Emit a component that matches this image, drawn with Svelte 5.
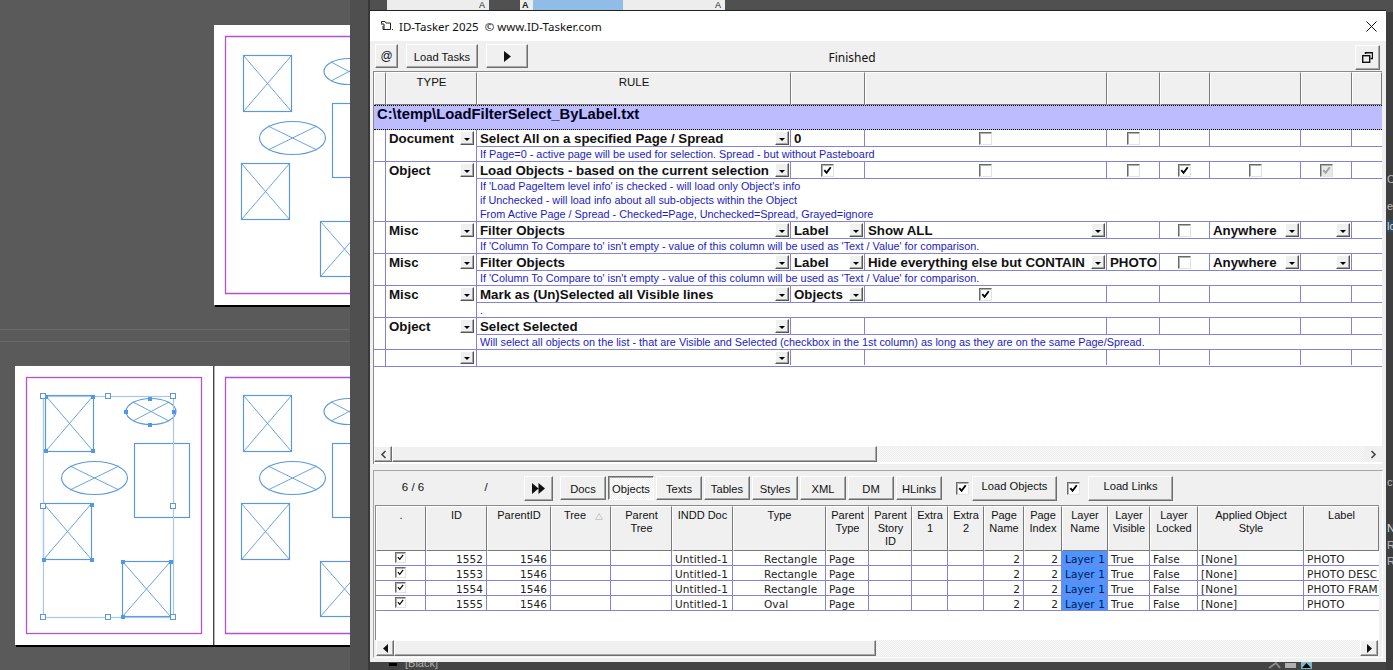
<script>
  const c = (s) => ({ k: 'c', s });
  const t = (v) => ({ k: 't', v });
  const d = (v = '') => ({ k: 'd', v });
  const n = { k: 'n' };

  const heads1 = ['', 'TYPE', 'RULE', '', '', '', '', '', '', ''];

  const rules = [
    { type: 'Document', rule: 'Select All on a specified Page / Spread',
      cells: [t('0'), c('off'), c('off'), n, n, n, n],
      sub: ['If Page=0 - active page will be used for selection. Spread - but without Pasteboard'] },
    { type: 'Object', rule: 'Load Objects - based on the current selection',
      cells: [c('on'), c('off'), c('off'), c('on'), c('off'), c('gray'), n],
      sub: ["If 'Load PageItem level info' is checked - will load only Object's info",
            'if Unchecked - will load info about all sub-objects within the Object',
            'From Active Page / Spread - Checked=Page, Unchecked=Spread, Grayed=ignore'] },
    { type: 'Misc', rule: 'Filter Objects',
      cells: [d('Label'), d('Show ALL'), n, c('off'), d('Anywhere'), d(), n],
      sub: ["If 'Column To Compare to' isn't empty - value of this column will be used as 'Text / Value' for comparison."] },
    { type: 'Misc', rule: 'Filter Objects',
      cells: [d('Label'), d('Hide everything else but CONTAIN'), t('PHOTO'), c('off'), d('Anywhere'), d(), n],
      sub: ["If 'Column To Compare to' isn't empty - value of this column will be used as 'Text / Value' for comparison."] },
    { type: 'Misc', rule: 'Mark as (Un)Selected all Visible lines',
      cells: [d('Objects'), c('on'), n, n, n, n, n],
      sub: ['.'] },
    { type: 'Object', rule: 'Select Selected',
      cells: [n, n, n, n, n, n, n],
      sub: ['Will select all objects on the list - that are Visible and Selected (checkbox in the 1st column) as long as they are on the same Page/Spread.'] },
    { type: '', rule: '', cells: [n, n, n, n, n, n, n], sub: [] }
  ];

  const tabs = ['Docs', 'Objects', 'Texts', 'Tables', 'Styles', 'XML', 'DM', 'HLinks'];

  const heads2 = ['.', 'ID', 'ParentID', 'Tree', 'Parent\nTree', 'INDD Doc', 'Type', 'Parent\nType',
    'Parent\nStory\nID', 'Extra\n1', 'Extra\n2', 'Page\nName', 'Page\nIndex', 'Layer\nName',
    'Layer\nVisible', 'Layer\nLocked', 'Applied Object\nStyle', 'Label'];

  const aligns = ['mid', 'r', 'r', '', '', '', 'ind', '', '', '', '', 'r', 'r', 'sel', '', '', '', ''];

  const base = (id, type, label) => ['', id, '1546', '', '', 'Untitled-1', type, 'Page', '', '', '', '2', '2', 'Layer 1', 'True', 'False', '[None]', label];
  const objs = [
    base('1552', 'Rectangle', 'PHOTO'),
    base('1553', 'Rectangle', 'PHOTO DESC'),
    base('1554', 'Rectangle', 'PHOTO FRAM'),
    base('1555', 'Oval', 'PHOTO')
  ];

  const white = [[43, 396], [108, 396], [173, 396], [43, 506], [173, 506], [43, 617], [108, 617], [173, 617]];
  const solid = [[46, 397], [93, 397], [46, 451], [93, 451], [92, 505], [44, 560], [92, 560], [123, 562], [171, 562], [123, 617],
    [150, 399], [126, 412], [174, 412], [150, 425]];
</script>

{#snippet check(s, small)}
  <span class="cb {s}" class:small>
    {#if s !== 'off'}
      <svg viewBox="0 0 12 12" class="tick"><path d="M2.500 5.500 5 8.500 9.500 2.500" /></svg>
    {/if}
  </span>
{/snippet}

{#snippet dd()}
  <span class="dd"><i></i></span>
{/snippet}

{#snippet shapes()}
  <g class="shape">
    <rect x="243.500" y="55.500" width="48" height="56" />
    <path class="x" d="M243.500 55.500 291.500 111.500M291.500 55.500 243.500 111.500" />
    <ellipse cx="349" cy="71.500" rx="25" ry="13" />
    <path class="x" d="M331 62 367 81M367 62 331 81" />
    <ellipse cx="292.500" cy="138" rx="33" ry="16.500" />
    <path class="x" d="M268 126 317 150M317 126 268 150" />
    <rect x="332.500" y="103.500" width="55" height="74" />
    <rect x="241.500" y="163.500" width="48" height="56" />
    <path class="x" d="M241.500 163.500 289.500 219.500M289.500 163.500 241.500 219.500" />
    <rect x="320.500" y="221.500" width="48" height="55" />
    <path class="x" d="M320.500 221.500 368.500 276.500M368.500 221.500 320.500 276.500" />
  </g>
{/snippet}

<div class="screen">
  <svg class="canvas" width="350" height="670" viewBox="0 0 350 670">
    <rect x="0" y="329" width="350" height="1" fill="#6a6a6a" />
    <rect x="0" y="341" width="350" height="1" fill="#6a6a6a" />

    <rect x="215" y="27" width="135" height="280" fill="#000" />
    <rect x="214" y="25" width="136" height="280" fill="#fff" />
    <path class="margin" d="M350 36.500H225.500V293.500H350" />
    {@render shapes()}

    <rect x="16" y="368" width="334" height="279" fill="#000" />
    <rect x="15" y="366" width="335" height="279" fill="#fff" />
    <rect x="213" y="366" width="1.400" height="279" fill="#444" />
    <rect class="margin" x="26.500" y="377.500" width="175" height="256" />
    <path class="margin" d="M350 377.500H225.500V633.500H350" />
    <g transform="translate(0 340)">{@render shapes()}</g>
    <g transform="translate(-198 340)">{@render shapes()}</g>
    <rect class="bbox" x="43.500" y="396.500" width="130" height="221" />
    {#each solid as p}
      <rect class="hs" x={p[0] - 2} y={p[1] - 2} width="4" height="4" />
    {/each}
    {#each white as p}
      <rect class="hw" x={p[0] - 2.5} y={p[1] - 2.5} width="5" height="5" />
    {/each}
  </svg>

  <div class="strip"></div>

  <div class="ruler one"><span>A</span></div>
  <div class="ruler two">
    <b>A</b><em></em><span>A</span>
  </div>

  <div class="peek">
    <span class="p3">Ca</span>
    <span class="p4">es</span>
    <span class="p5">lo</span>
    <span class="p1">ct</span>
    <span class="p2">Ne</span>
    <span class="p6">Ra</span>
    <span class="p7">Ra</span>
  </div>

  <div class="foot">
    <i class="swatch"></i><span>[Black]</span>
  </div>
  <svg class="footicons" width="46" height="8" viewBox="0 0 46 8">
    <path d="M1 7 8 2 12 7" fill="none" stroke="#8a8a8a" stroke-width="2" />
    <rect x="17" y="2" width="11" height="5" fill="#b0b0b0" />
    <rect x="33" y="1" width="11" height="7" fill="#7ab8c8" />
    <path d="M34 7 38.500 2 43 7Z" fill="#000" />
  </svg>

  <main class="win">
    <header class="title">
      <svg class="appicon" width="13" height="12" viewBox="0 0 13 12">
        <path d="M1.500 3.500V1.500H5L6 3H10.500V9.500H3V6" fill="none" stroke="#222" />
        <path d="M1 4H4V9" fill="none" stroke="#222" />
        <rect x="12" y="9" width="1" height="1" fill="#222" />
      </svg>
      <span class="ttext">ID-Tasker 2025&nbsp;&nbsp;© www.ID-Tasker.com</span>
      <svg class="close" width="11" height="11" viewBox="0 0 11 11">
        <path d="M.5.5 10.500 10.500M10.500.5.5 10.500" stroke="#111" fill="none" />
      </svg>
    </header>

    <div class="tools">
      <button class="btn at">@</button>
      <button class="btn loadtasks">Load Tasks</button>
      <button class="btn play" aria-label="Run">
        <svg width="7" height="11" viewBox="0 0 7 11"><path d="M0 0 7 5.500 0 11Z" fill="#111" /></svg>
      </button>
      <span class="status">Finished</span>
      <button class="btn restore" aria-label="Restore">
        <svg width="11" height="11" viewBox="0 0 11 11">
          <path d="M3.500 2V.8H10.500V6.500H8.500" fill="none" stroke="#111" stroke-width="1.400" />
          <rect x=".7" y="3.700" width="7" height="6.600" fill="none" stroke="#111" stroke-width="1.400" />
        </svg>
      </button>
    </div>

    <section class="grid1">
      <div class="g1cols heads1">
        {#each heads1 as h}
          <div class="hd">{h}</div>
        {/each}
      </div>
      <div class="band">C:\temp\LoadFilterSelect_ByLabel.txt</div>

      {#each rules as r}
        <div class="g1cols rule" class:bare={!r.sub.length}>
          <div class="c gut"></div>
          <div class="c typ">
            <span class="val">{r.type}</span>{@render dd()}
          </div>
          <div class="c"><span class="val">{r.rule}</span>{@render dd()}</div>
          {#each r.cells as cell}
            {#if cell.k === 'c'}
              <div class="c mid">{@render check(cell.s, false)}</div>
            {:else if cell.k === 'd'}
              <div class="c"><span class="val">{cell.v}</span>{@render dd()}</div>
            {:else if cell.k === 't'}
              <div class="c"><span class="val">{cell.v}</span></div>
            {:else}
              <div class="c"></div>
            {/if}
          {/each}
          {#if r.sub.length}
            <div class="sub">
              {#each r.sub as line}
                <div>{line}</div>
              {/each}
            </div>
          {/if}
        </div>
      {/each}

      <div class="fill"></div>

      <div class="sb">
        <button class="btn sbb" aria-label="Left">
          <svg width="7" height="9" viewBox="0 0 7 9"><path d="M5.500 1 2 4.500 5.500 8" fill="none" stroke="#444" stroke-width="1.600" /></svg>
        </button>
        <div class="btn thumb t1"></div>
        <div class="track"></div>
        <button class="flatb" aria-label="Right">
          <svg width="7" height="9" viewBox="0 0 7 9"><path d="M1.500 1 5 4.500 1.500 8" fill="none" stroke="#444" stroke-width="1.600" /></svg>
        </button>
      </div>
    </section>

    <section class="panel">
      <div class="bar">
        <span class="count">6 / 6</span>
        <span class="slash">/</span>
        <button class="btn ff" aria-label="Next">
          <svg width="13" height="11" viewBox="0 0 13 11"><path d="M0 0 6.500 5.500 0 11ZM6.500 0 13 5.500 6.500 11Z" fill="#111" /></svg>
        </button>
        <div class="tabs">
          {#each tabs as tab}
            <button class="btn tab" class:on={tab === 'Objects'}>{tab}</button>
          {/each}
        </div>
        <span class="barcb a">{@render check('on', false)}</span>
        <button class="btn load">Load Objects</button>
        <span class="barcb b">{@render check('on', false)}</span>
        <button class="btn load l2">Load Links</button>
      </div>

      <div class="grid2">
        <div class="g2cols heads2">
          {#each heads2 as h}
            <div class="hd h2" class:tree={h === 'Tree'}>
              {h}
              {#if h === 'Tree'}
                <svg class="sort" width="8" height="7" viewBox="0 0 8 7"><path d="M4 .5 7.500 6.500H.5Z" fill="none" stroke="#c8c8c8" /></svg>
              {/if}
            </div>
          {/each}
        </div>
        {#each objs as row}
          <div class="g2cols drow">
            {#each row as v, i}
              <div class="dc {aligns[i]}">
                {#if i === 0}{@render check('on', true)}{:else}{v}{/if}
              </div>
            {/each}
          </div>
        {/each}
      </div>

      <div class="sb s2">
        <button class="btn sbb" aria-label="Left">
          <svg width="5" height="9" viewBox="0 0 5 9"><path d="M5 0 0 4.500 5 9Z" fill="#111" /></svg>
        </button>
        <div class="btn thumb t2"></div>
        <div class="track"></div>
        <button class="btn sbb" aria-label="Right">
          <svg width="5" height="9" viewBox="0 0 5 9"><path d="M0 0 5 4.500 0 9Z" fill="#111" /></svg>
        </button>
      </div>
    </section>
  </main>
</div>

<style>
  :global(body) { margin: 0; overflow: hidden; background: #444; }

  .screen {
    position: relative;
    width: 1393px;
    height: 670px;
    overflow: hidden;
    background: linear-gradient(#505050 0 12px, #444 12px);
    font-family: "Noto Sans", "Liberation Sans", sans-serif;
    color: #111;
  }

  .canvas { position: absolute; left: 0; top: 0; background: #5a5a5a; }
  .margin { fill: none; stroke: #b452cc; stroke-width: 1.300; }
  .shape rect, .shape ellipse { fill: none; stroke: #5a98dc; stroke-width: 1.150; }
  .shape .x { fill: none; stroke: #5a98dc; stroke-width: .9; }
  .bbox { fill: none; stroke: #a6c8ea; stroke-width: 1.200; }
  .hs { fill: #4f97ec; }
  .hw { fill: #fff; stroke: #5a98dc; stroke-width: 1; }

  .strip {
    position: absolute;
    left: 350px; top: 0;
    width: 20px; height: 670px;
    background: #4f4f4f;
    border-right: 2px solid #383838;
    box-sizing: border-box;
  }

  .ruler {
    position: absolute;
    top: 0;
    height: 10px;
    background: #ededed;
    font: 9px/10px "Liberation Sans", sans-serif;
    color: #222;
    display: flex;
    overflow: hidden;
  }
  .ruler.one { left: 387px; width: 102px; justify-content: flex-end; padding-right: 4px; box-sizing: border-box; }
  .ruler.two { left: 520px; width: 205px; }
  .ruler.two b { width: 13px; padding-left: 2px; box-sizing: border-box; }
  .ruler.two em { width: 90px; background: #90bce8; }
  .ruler.two span { flex: 1; text-align: right; padding-right: 4px; }

  .peek {
    position: absolute;
    left: 1386px; top: 12px;
    width: 7px; height: 658px;
    background: #3e3e3e;
    overflow: hidden;
    font: 11px/12px "Liberation Sans", sans-serif;
    color: #bbb;
  }
  .peek span { position: absolute; left: 1px; }
  .p3 { top: 161px; }
  .p4 { top: 188px; }
  .p5 { top: 208px; width: 7px; background: #2d4a66; color: #ddd; }
  .p1 { top: 464px; }
  .p2 { top: 510px; color: #ddd; }
  .p6 { top: 527px; }
  .p7 { top: 543px; }

  .foot {
    position: absolute;
    left: 389px; top: 658px;
    display: flex;
    align-items: flex-start;
    gap: 8px;
    font: 11px/11px "Liberation Sans", sans-serif;
    color: #b0b0b0;
  }
  .swatch { width: 8px; height: 3px; margin-top: 5px; background: #000; }
  .footicons { position: absolute; left: 1268px; top: 661px; }

  .win {
    position: absolute;
    left: 370px; top: 11px;
    width: 1016px; height: 651px;
    background: #f0f0f0;
    display: flex;
    flex-direction: column;
    padding-left: 3px;
    box-sizing: border-box;
    box-shadow: 0 -1px 0 #222;
  }

  .title {
    height: 30px;
    margin-left: -3px;
    background: #fff;
    display: flex;
    align-items: center;
    padding-left: 10px;
    font-size: 11.500px;
    flex: none;
  }
  .appicon { flex: none; }
  .ttext { margin-left: 6px; }
  .close { margin-left: auto; margin-right: 9px; }

  .btn {
    box-sizing: border-box;
    padding: 0;
    margin: 0;
    background: #f0f0f0;
    border: 1px solid;
    border-color: #fff #6e6e6e #6e6e6e #fff;
    box-shadow: inset -1px -1px 0 #a8a8a8;
    font: 11.200px "Liberation Sans", sans-serif;
    color: #111;
    display: flex;
    align-items: center;
    justify-content: center;
  }

  .tools {
    height: 30px;
    display: flex;
    align-items: center;
    flex: none;
  }
  .at { width: 23px; height: 24px; margin-left: 2px; font-size: 12px; }
  .loadtasks { width: 72px; height: 24px; margin-left: 8px; padding-top: 1px; }
  .play { width: 42px; height: 24px; margin-left: 8px; }
  .status { width: 648px; text-align: center; font-size: 12px; padding-top: 2px; }
  .restore { width: 25px; height: 25px; margin: 2px 6px 0 auto; }

  .grid1 {
    width: 1009px;
    height: 393px;
    flex: none;
    box-sizing: border-box;
    border-top: 1px solid #8a8a8a;
    border-left: 1px solid #8a8a8a;
    background: #fff;
    display: flex;
    flex-direction: column;
  }

  .g1cols {
    display: grid;
    grid-template-columns: 12px 91px 314px 74px 242px 53px 50px 91px 51px 30px;
  }

  .hd {
    box-sizing: border-box;
    background: #f0f0f0;
    border: 1px solid;
    border-color: #fff #7a7a7a #7a7a7a #fff;
    text-align: center;
    font: 11.500px/13px "Liberation Sans", sans-serif;
    color: #111;
    white-space: pre-line;
    overflow: hidden;
  }
  .heads1 { height: 33px; flex: none; }
  .heads1 .hd { padding-top: 3px; }

  .band {
    box-sizing: border-box;
    height: 25px;
    flex: none;
    background: #bcbcff;
    border-top: 1px dotted #000;
    border-bottom: 1px dotted #000;
    font: bold 14.800px/16px "Liberation Sans", sans-serif;
    color: #000018;
    padding-left: 3px;
  }

  .rule {
    flex: none;
    grid-template-rows: 17px auto;
    border-bottom: 1px solid #8484d4;
  }
  .rule.bare { grid-template-rows: 15px; }
  .bare .c { border-bottom: 0; }
  .bare .dd { height: 13px; }

  .c {
    box-sizing: border-box;
    border-right: 1px solid #8484d4;
    border-bottom: 1px solid #8484d4;
    display: flex;
    align-items: center;
    padding: 0 1px 0 3px;
    font: bold 13.300px/16px "Liberation Sans", sans-serif;
    color: #111;
    min-width: 0;
    white-space: nowrap;
    overflow: hidden;
  }
  .c.mid { justify-content: center; padding: 0; }
  .c.gut { grid-row: 1 / span 2; border-bottom: 0; }
  .c.typ { grid-row: 1 / span 2; border-bottom: 0; align-items: flex-start; padding-right: 2px; }
  .c.typ .dd { margin-top: 1px; }
  .c:nth-child(10) { border-right: 0; }
  .val { flex: 1; min-width: 0; overflow: hidden; height: 16px; padding-top: 1px; box-sizing: border-box; }

  .sub {
    grid-column: 3 / -1;
    font: 10.850px/14px "Liberation Sans", sans-serif;
    color: #1c1cc4;
    padding-left: 3px;
    min-height: 0;
    white-space: nowrap;
  }

  .dd {
    flex: none;
    width: 14px;
    height: 14px;
    box-sizing: border-box;
    background: #f0f0f0;
    border: 1px solid;
    border-color: #fff #555 #555 #fff;
    box-shadow: inset -1px -1px 0 #a8a8a8;
    display: flex;
    align-items: center;
    justify-content: center;
    margin-left: auto;
  }
  .dd i {
    width: 0; height: 0;
    margin: 2px 1px 0 0;
    border-left: 3px solid transparent;
    border-right: 3px solid transparent;
    border-top: 3px solid #000;
  }

  .cb {
    width: 13px;
    height: 13px;
    box-sizing: border-box;
    display: inline-block;
    background: #fff;
    border: 1px solid;
    border-color: #6a6a6a #e2e2e2 #e2e2e2 #6a6a6a;
    box-shadow: inset 1px 1px 0 #b0b0b0;
    position: relative;
    flex: none;
  }
  .cb.small { width: 11px; height: 11px; }
  .tick { position: absolute; inset: 0; width: 100%; height: 100%; }
  .tick path { fill: none; stroke: #000; stroke-width: 2; }
  .cb.gray { background: #e8e8e8; }
  .cb.gray .tick path { stroke: #a0a0a0; }
  .cb.small .tick path { stroke-width: 1.600; }

  .fill { flex: 1; }

  .sb {
    display: flex;
    height: 16px;
    flex: none;
    margin-bottom: 2px;
    box-sizing: border-box;
  }
  .sbb { width: 18px; height: 16px; flex: none; }
  .flatb {
    width: 18px; height: 16px; flex: none;
    padding: 0; border: 0; background: #f0f0f0;
    display: flex; align-items: center; justify-content: center;
  }
  .thumb { height: 16px; flex: none; }
  .t1 { width: 485px; }
  .t2 { width: 482px; }
  .track {
    flex: 1;
    background: repeating-conic-gradient(#ececec 0 25%, #fafafa 0 50%) 0 0 / 2px 2px;
  }

  .panel {
    box-sizing: border-box;
    width: 1010px;
    height: 188px;
    margin-top: 6px;
    flex: none;
    border: 1px solid #a6a6a6;
    border-right-color: #fff;
    border-bottom-color: #fff;
    display: flex;
    flex-direction: column;
  }

  .bar {
    height: 34px;
    flex: none;
    display: flex;
    align-items: center;
    font: 11.500px "Liberation Sans", sans-serif;
  }
  .count { width: 78px; text-align: center; flex: none; padding-bottom: 2px; }
  .slash { width: 68px; text-align: center; flex: none; padding-bottom: 2px; }
  .ff { width: 29px; height: 25px; margin-left: 4px; flex: none; }
  .tabs { display: flex; gap: 2px; margin-left: 7px; flex: none; }
  .tab { width: 46px; height: 24px; padding-top: 1px; }
  .tab.on {
    background: repeating-conic-gradient(#f0f0f0 0 25%, #fff 0 50%) 0 0 / 2px 2px;
    border-color: #6e6e6e #fff #fff #6e6e6e;
    box-shadow: inset 1px 1px 0 #a8a8a8;
  }
  .barcb { display: flex; flex: none; }
  .barcb.a { margin-left: 14px; }
  .barcb.b { margin-left: 10px; }
  .load { width: 85px; height: 25px; margin-left: 3px; padding-bottom: 4px; flex: none; }
  .l2 { margin-left: 8px; }

  .grid2 {
    margin-left: 1px;
    height: 135px;
    flex: none;
    width: 1004px;
    background: #fff;
    border-top: 1px solid #8a8a8a;
    border-left: 1px solid #8a8a8a;
    box-sizing: border-box;
    overflow: hidden;
  }
  .g2cols {
    display: grid;
    grid-template-columns: 50px 61px 64px 60px 61px 61px 93px 43px 43px 36px 36px 40px 38px 46px 42px 48px 106px 75px;
  }
  .heads2 { height: 45px; }
  .h2 { padding-top: 2px; position: relative; font-size: 11px; }
  .h2.tree { padding-right: 12px; }
  .sort { position: absolute; right: 7px; top: 6px; }

  .drow {
    height: 15px;
  }
  .dc {
    box-sizing: border-box;
    border-right: 1px solid #8484d4;
    border-bottom: 1px solid #8484d4;
    padding: 1px 3px 0;
    font: 10.500px/14px "DejaVu Sans", sans-serif;
    color: #222;
    white-space: nowrap;
    overflow: hidden;
    letter-spacing: .1px;
  }
  .dc:last-child { border-right: 0; }
  .dc.r { text-align: right; }
  .dc.mid { display: flex; justify-content: center; align-items: flex-start; padding: 1px 0 0; }
  .dc.ind { padding-left: 31px; }
  .dc.sel { background: #4d94ff; color: #001a55; }

  .s2 { margin: 0 0 0 2px; width: 1002px; }
</style>
